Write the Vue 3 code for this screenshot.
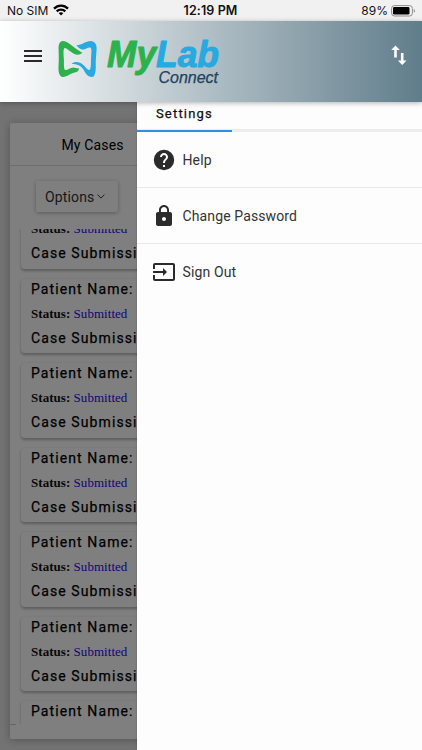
<script setup>
const cases = Array.from({ length: 7 }, (_, id) => ({ id, status: 'Submitted' }))
const menu = [
  { id: 'help', label: 'Help' },
  { id: 'lock', label: 'Change Password' },
  { id: 'exit', label: 'Sign Out' }
]
</script>

<template>
  <div class="app">
    <div class="status-bar">
      <div class="carrier">
        <span>No SIM</span>
        <svg width="16" height="12" viewBox="0 0 16 12">
          <g fill="none" stroke="#000" stroke-width="2.3">
            <path d="M1 4.6C5 .6 11 .6 15 4.6" />
            <path d="M3.7 7.3C6.1 5 9.9 5 12.3 7.3" />
          </g>
          <path d="M5.6 9.1c1.4-1.2 3.4-1.2 4.8 0L8 11.6z" />
        </svg>
      </div>
      <div class="clock">12:19 PM</div>
      <div class="power">
        <span>89%</span>
        <svg width="25" height="12" viewBox="0 0 25 12">
          <rect x=".6" y=".6" width="20.8" height="10.4" rx="2.8" fill="none" stroke="#8b8b8b" />
          <rect x="2" y="2" width="16.5" height="7.6" rx="1.4" />
          <path d="M22.8 4v3.8c1.6-.5 1.6-3.3 0-3.8z" fill="#8b8b8b" />
        </svg>
      </div>
    </div>

    <header class="header">
      <div class="burger"><i></i><i></i><i></i></div>
      <svg class="logo" width="166" height="54" viewBox="0 0 166 54">
        <path fill="#2bb24c" d="M1.600 14C1.200 8 3 5 6 5C10 5 14 9 18 12C21 14.200 23.500 15.800 25.500 16.800C23 19 20 19 17.500 18C14 16.500 10.500 12.500 8 12C6 12 6.500 18 6.800 22C7.200 27 6.500 32.500 8 34C10.500 34.500 13 31.500 16.500 31.400C18.500 31.500 20 32.700 22 32.300C22 34 21 36 18.500 36.300C14 37 10 41 6 41C2 41 1.200 35 1.500 30C2 24 1.700 19 1.600 14Z" />
        <path fill="#27a9e1" d="M19.500 9.300C25 9.200 29 5 33.500 5C38 5 40 9 39.600 13C39.400 18 38.500 24 38.800 30C38.800 36 38 41 35 41C31 41 28.800 38 26.800 34C24 29.500 20 28 14.500 28C17 25.800 20 25.500 23 26.700C27 28.200 29.500 33.500 32.500 34C34.500 33 33.700 25 34.200 20C34.500 16 35 12 33 11.500C30.500 11 28.500 13.800 25.500 13.400C22 13 21 11 19.500 9.300Z" />
        <g class="brand">
          <text x="50" y="31.200" textLength="49" lengthAdjust="spacingAndGlyphs" fill="#2bb24c" stroke="#2bb24c">My</text>
          <text x="99" y="31.200" textLength="63" lengthAdjust="spacingAndGlyphs" fill="#27a9e1" stroke="#27a9e1">Lab</text>
        </g>
        <text class="sub" x="101.500" y="47.300" textLength="59.500" lengthAdjust="spacingAndGlyphs">Connect</text>
      </svg>
      <svg class="swap" width="16" height="21" viewBox="0 0 16 21" fill="#fff">
        <path d="M4.500 .5L8.800 5H5.800V12.500H3.200V5H.2z" />
        <path d="M11.200 20L6.900 15.600H9.900V8H12.500V15.600H15.500z" />
      </svg>
    </header>

    <main class="content">
      <section class="panel">
        <h2 class="panel-title">My Cases</h2>
        <div class="toolbar">
          <button class="options">
            Options
            <svg width="8" height="5" viewBox="0 0 8 5" fill="none" stroke="#222" stroke-width=".9"><path d="M.5 .6L4 4.100L7.500 .6" /></svg>
          </button>
        </div>
        <div class="list">
          <article v-for="c in cases" :key="c.id" class="case">
            <div class="field">Patient Name:</div>
            <div class="state"><b>Status:</b> <span>{{ c.status }}</span></div>
            <div class="field last">Case Submission</div>
          </article>
        </div>
        <div class="panel-foot"></div>
      </section>
      <div class="scrim"></div>
      <aside class="drawer">
        <div class="tabs"><div class="tab">Settings</div></div>
        <div v-for="m in menu" :key="m.id" class="item">
          <svg width="24" height="24" viewBox="0 0 24 24" fill="#2b2b2b">
            <path v-if="m.id === 'help'" d="M12 1.800a10.200 10.200 0 1 0 0 20.400a10.200 10.200 0 0 0 0-20.400zm1 17.200h-2v-2h2zm2.070-7.750l-.9.920C13.450 12.900 13 13.500 13 15h-2v-.5c0-1.100.45-2.100 1.170-2.830l1.240-1.260c.37-.36.59-.86.59-1.410 0-1.100-.9-2-2-2s-2 .9-2 2H8c0-2.210 1.790-4 4-4s4 1.790 4 4c0 .88-.36 1.680-.93 2.250z" />
            <path v-else-if="m.id === 'lock'" d="M18 8h-1V6c0-2.760-2.240-5-5-5S7 3.240 7 6v2H6c-1.100 0-2 .9-2 2v10c0 1.100.9 2 2 2h12c1.100 0 2-.9 2-2V10c0-1.100-.9-2-2-2zm-6 9c-1.100 0-2-.9-2-2s.9-2 2-2 2 .9 2 2-.9 2-2 2zm3.100-9H8.900V6c0-1.710 1.390-3.100 3.100-3.100s3.100 1.390 3.100 3.100z" />
            <path v-else d="M21 3.010H3c-1.100 0-2 .9-2 2V9h2V4.990h18v14.030H3V15H1v4.010c0 1.100.9 1.980 2 1.980h18c1.100 0 2-.88 2-1.980v-14c0-1.110-.9-2-2-2zM11 16l4-4-4-4v3H1v2h10z" />
          </svg>
          <span>{{ m.label }}</span>
        </div>
      </aside>
    </main>
  </div>
</template>

<style>
body { margin: 0; }
</style>

<style scoped>
* { box-sizing: border-box; }
.app {
  width: 422px;
  height: 750px;
  display: flex;
  flex-direction: column;
  overflow: hidden;
  font-family: Roboto, "Liberation Sans", sans-serif;
}
.status-bar {
  height: 21px;
  flex: none;
  display: grid;
  grid-template-columns: 1fr auto 1fr;
  align-items: center;
  padding: 1px 8px 0 7px;
  background: #f1f1f1;
  color: #111;
  font: 12px/20px Inter, sans-serif;
}
.carrier, .power { display: flex; align-items: center; gap: 5px; }
.carrier svg { margin-top: -2px; }
.power { justify-content: flex-end; gap: 3px; margin-right: -2px; }
.power svg { margin-top: -1px; }
.clock { font-size: 12.5px; font-weight: 600; letter-spacing: .1px; }
.header {
  position: relative;
  z-index: 3;
  height: 81px;
  flex: none;
  display: flex;
  align-items: flex-start;
  padding: 0 15px 0 24px;
  background: linear-gradient(90deg, #fff 0%, #607d8b 100%);
  box-shadow: 0 1px 5px rgba(0, 0, 0, .3);
}
.burger { width: 18px; padding-top: 29px; display: grid; gap: 3px; }
.burger i { height: 2px; background: #30262e; }
.logo { margin: 15px 0 0 15px; flex: none; overflow: visible; }
.brand { font: italic 700 36px "Liberation Sans", sans-serif; stroke-width: 1; stroke-linejoin: round; }
.sub { font: italic 16px "Liberation Sans", sans-serif; fill: #204361; stroke: #204361; stroke-width: .25; }
.swap { margin: 24px 0 0 auto; }
.content {
  position: relative;
  flex: 1;
  min-height: 0;
  padding: 21px 10px 11px;
  background: #e6e6e6;
}
.panel {
  height: 616px;
  display: flex;
  flex-direction: column;
  background: #fff;
  border-radius: 2px;
  box-shadow: 0 1px 8px rgba(0, 0, 0, .28);
}
.panel-title {
  height: 43px;
  flex: none;
  margin: 0;
  padding-left: 51.5px;
  border-bottom: 1px solid #dcdcdc;
  font-size: 14px;
  line-height: 45px;
  font-weight: 400;
  letter-spacing: .15px;
  color: #000;
}
.toolbar { height: 63px; flex: none; padding: 15px 26px; }
.options {
  width: 82px;
  height: 31px;
  display: flex;
  align-items: center;
  gap: 3px;
  padding: 0 9px;
  border: 0;
  border-radius: 2px;
  background: #fff;
  box-shadow: 0 1px 4px rgba(0, 0, 0, .3);
  color: #333;
  font: 14px Roboto, sans-serif;
  letter-spacing: .15px;
}
.list {
  height: 495px;
  flex: none;
  display: flex;
  flex-direction: column;
  justify-content: flex-start;
  gap: 10px;
  margin: 0 6px;
  padding: 0 5px;
  overflow: hidden;
}
.case {
  height: 74.5px;
  flex: none;
  padding: 0 10px;
  border-radius: 4px;
  background: #fff;
  box-shadow: 0 1.5px 3px rgba(0, 0, 0, .28);
  white-space: nowrap;
  overflow: hidden;
}
.case:first-child { margin-top: -35px; }
.field { height: 24px; font-size: 14px; line-height: 20px; letter-spacing: 1.1px; color: #000; -webkit-text-stroke: .25px #000; }
.field.last { padding-top: 1px; }
.state { height: 24px; font: 13px/21px "Liberation Serif", serif; letter-spacing: .04px; color: #111; }
.state span { color: #2408f0; }
.panel-foot { flex: 1; }
.panel-foot::before { content: ""; display: block; width: 6px; height: 1px; background: #ccc; }
.scrim { position: absolute; inset: 0; background: rgba(0, 0, 0, .5); }
.drawer {
  position: absolute;
  inset: 0 0 0 137px;
  background: #fdfdfd;
  box-shadow: 0 0 2px rgba(0, 0, 0, .2);
}
.tabs { height: 30px; display: flex; box-shadow: inset 0 -3px #ededed; }
.tab {
  width: 95px;
  border-bottom: 2px solid #2f8fe0;
  text-align: center;
  font-size: 13px;
  line-height: 24px;
  letter-spacing: 1.2px;
  color: #111;
  -webkit-text-stroke: .25px #111;
}
.item {
  height: 56px;
  display: flex;
  align-items: center;
  gap: 6.5px;
  padding-left: 15px;
  border-bottom: 1px solid #e9e9e9;
  font-size: 14px;
  letter-spacing: .12px;
  color: #333;
}
.item:last-child { border-bottom: 0; }
</style>
